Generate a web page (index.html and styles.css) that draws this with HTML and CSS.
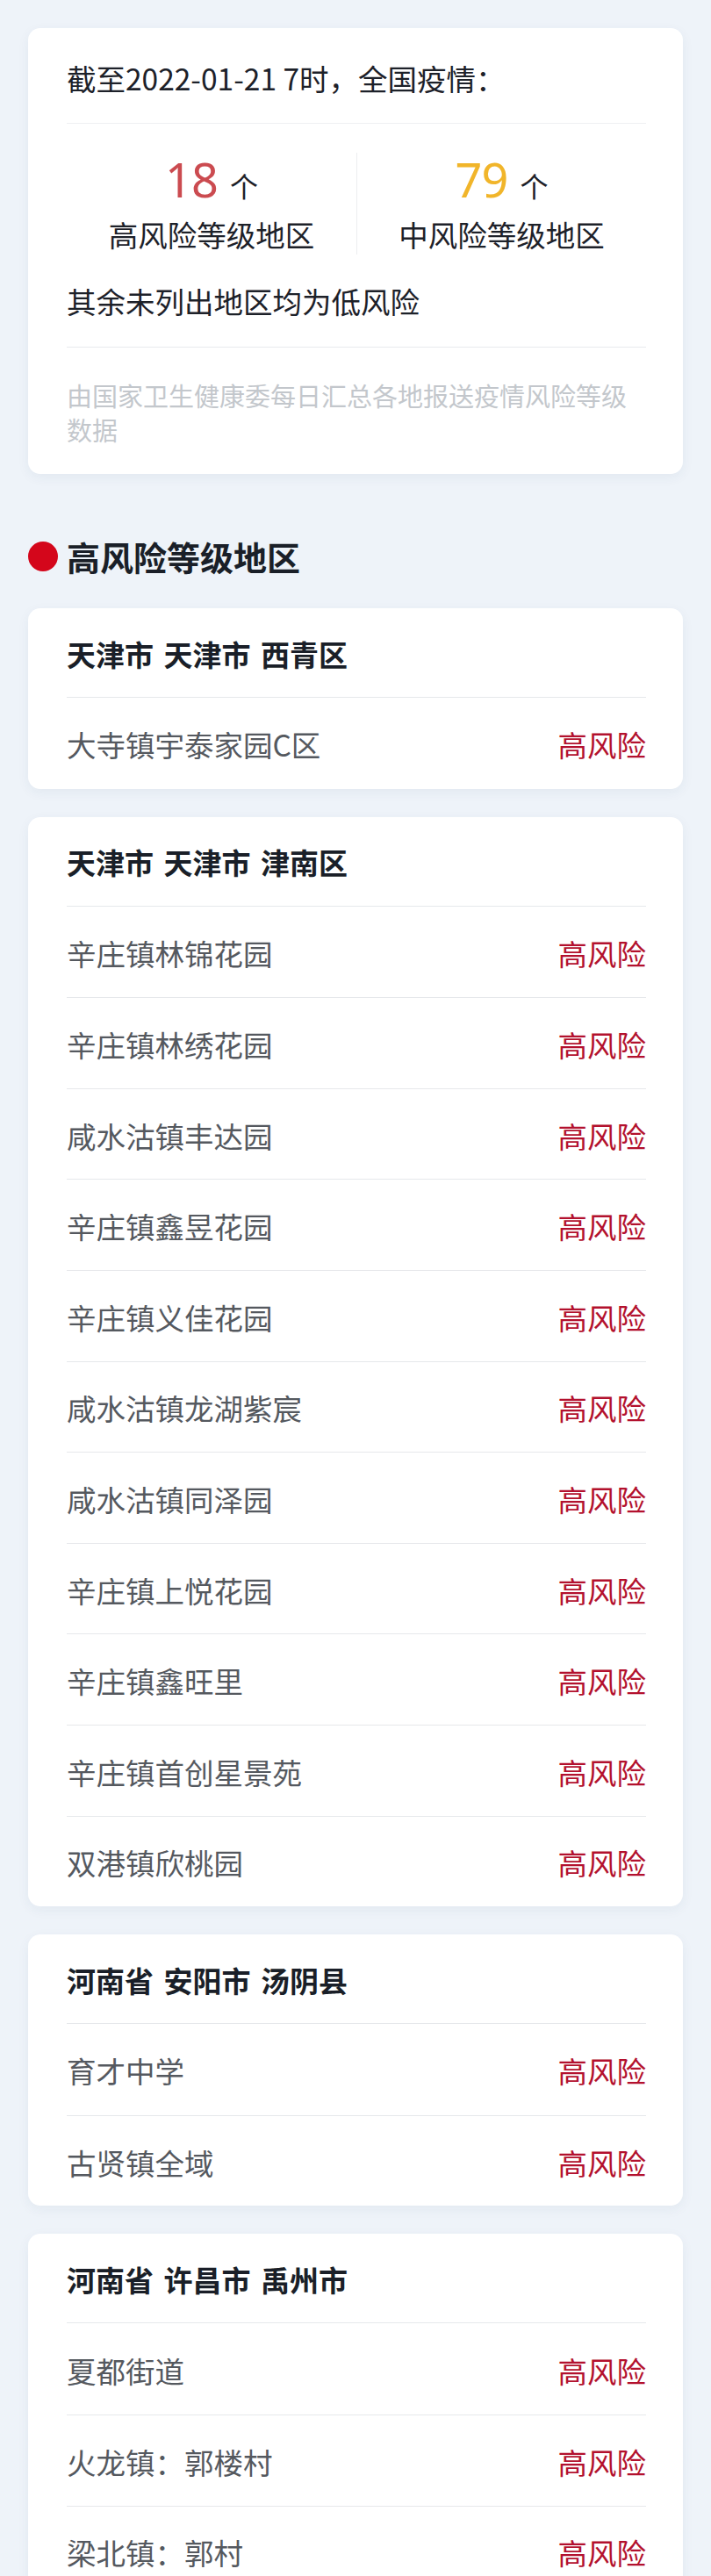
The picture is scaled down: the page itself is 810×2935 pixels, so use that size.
FILE: index.html
```html
<!DOCTYPE html>
<html lang="zh-CN">
<head>
<meta charset="utf-8">
<title>风险等级地区</title>
<link rel="stylesheet" href="styles.css">
</head>
<body>
<div class="page">
  <section class="card summary">
    <div class="summary-title">截至2022-01-21 7时，全国疫情：</div>
    <div class="stats">
      <div class="stat">
        <div class="stat-num"><span class="num high">18</span><span class="unit">个</span></div>
        <div class="stat-label">高风险等级地区</div>
      </div>
      <div class="stat stat-second">
        <div class="stat-num"><span class="num mid">79</span><span class="unit">个</span></div>
        <div class="stat-label">中风险等级地区</div>
      </div>
    </div>
    <div class="summary-note">其余未列出地区均为低风险</div>
    <div class="summary-source">由国家卫生健康委每日汇总各地报送疫情风险等级数据</div>
  </section>

  <h2 class="section-title"><span class="dot"></span>高风险等级地区</h2>

  <section class="card group">
    <div class="group-head">天津市 天津市 西青区</div>
    <div class="row"><span class="place">大寺镇宇泰家园C区</span><span class="risk">高风险</span></div>
  </section>

  <section class="card group">
    <div class="group-head">天津市 天津市 津南区</div>
    <div class="row"><span class="place">辛庄镇林锦花园</span><span class="risk">高风险</span></div>
    <div class="row"><span class="place">辛庄镇林绣花园</span><span class="risk">高风险</span></div>
    <div class="row"><span class="place">咸水沽镇丰达园</span><span class="risk">高风险</span></div>
    <div class="row"><span class="place">辛庄镇鑫昱花园</span><span class="risk">高风险</span></div>
    <div class="row"><span class="place">辛庄镇义佳花园</span><span class="risk">高风险</span></div>
    <div class="row"><span class="place">咸水沽镇龙湖紫宸</span><span class="risk">高风险</span></div>
    <div class="row"><span class="place">咸水沽镇同泽园</span><span class="risk">高风险</span></div>
    <div class="row"><span class="place">辛庄镇上悦花园</span><span class="risk">高风险</span></div>
    <div class="row"><span class="place">辛庄镇鑫旺里</span><span class="risk">高风险</span></div>
    <div class="row"><span class="place">辛庄镇首创星景苑</span><span class="risk">高风险</span></div>
    <div class="row"><span class="place">双港镇欣桃园</span><span class="risk">高风险</span></div>
  </section>

  <section class="card group">
    <div class="group-head">河南省 安阳市 汤阴县</div>
    <div class="row"><span class="place">育才中学</span><span class="risk">高风险</span></div>
    <div class="row"><span class="place">古贤镇全域</span><span class="risk">高风险</span></div>
  </section>

  <section class="card group">
    <div class="group-head">河南省 许昌市 禹州市</div>
    <div class="row"><span class="place">夏都街道</span><span class="risk">高风险</span></div>
    <div class="row"><span class="place">火龙镇：郭楼村</span><span class="risk">高风险</span></div>
    <div class="row"><span class="place">梁北镇：郭村</span><span class="risk">高风险</span></div>
  </section>
</div>
</body>
</html>
```

FILE: styles.css
```css
* {
  box-sizing: border-box;
}

html, body {
  margin: 0;
  padding: 0;
}

body {
  background: #eef3f9;
  font-family: "Noto Sans CJK SC", "Noto Sans", sans-serif;
  color: #1d2129;
}

.page {
  padding: 32px 32px 40px;
  display: flex;
  flex-direction: column;
}

.card {
  background: #ffffff;
  border-radius: 14px;
  box-shadow: 0 4px 14px rgba(30, 60, 110, 0.06);
  padding: 0 42px 0 44px;
}

/* summary card */
.summary {
  padding-top: 32px;
  padding-bottom: 31px;
}

.summary-title {
  font-size: 33.5px;
  line-height: 50px;
  color: #1d2129;
  padding-bottom: 26px;
  border-bottom: 1px solid #eef0f2;
}

.stats {
  display: grid;
  grid-template-columns: 1fr 1fr;
  padding-top: 33px;
}

.stat {
  display: flex;
  flex-direction: column;
  align-items: center;
}

.stat-second {
  border-left: 1px solid #eceef0;
}

.stat-num {
  height: 60px;
  line-height: 60px;
  display: flex;
  align-items: baseline;
  gap: 14px;
}

.num {
  font-family: "Noto Sans", "Noto Sans CJK SC", sans-serif;
  font-size: 54px;
  font-weight: 400;
  letter-spacing: -1px;
}

.num.high {
  color: #cb4b50;
}

.num.mid {
  color: #f1b52a;
}

.unit {
  font-size: 32px;
  color: #1d2129;
}

.stat-label {
  margin-top: 10px;
  font-size: 33.5px;
  line-height: 46px;
  color: #1d2129;
}

.summary-note {
  margin-top: 30px;
  font-size: 33.5px;
  line-height: 46px;
  color: #1d2129;
  padding-bottom: 29px;
  border-bottom: 1px solid #e8eaed;
}

.summary-source {
  margin-top: 35px;
  font-size: 29px;
  line-height: 39px;
  color: #c3c7cc;
}

/* section title */
.section-title {
  margin: 69px 0 34px;
  display: flex;
  align-items: center;
  gap: 10px;
  font-size: 38px;
  line-height: 50px;
  font-weight: 700;
  color: #1a1f28;
}

.dot {
  width: 34px;
  height: 34px;
  border-radius: 50%;
  background: #d4061b;
  flex: none;
}

/* group cards */
.group {
  margin-bottom: 32px;
}

.group-head {
  height: 102px;
  display: flex;
  align-items: center;
  padding-top: 2px;
  font-size: 33px;
  font-weight: 700;
  word-spacing: 4px;
  color: #1a1f28;
  border-bottom: 1px solid #e6e8eb;
}

.row {
  height: 103.6px;
  display: flex;
  align-items: center;
  justify-content: space-between;
  padding-top: 2px;
  font-size: 33.5px;
}

.row + .row {
  border-top: 1px solid #e6e8eb;
}

.place {
  color: #55595f;
}

.risk {
  color: #b3112e;
}
```
